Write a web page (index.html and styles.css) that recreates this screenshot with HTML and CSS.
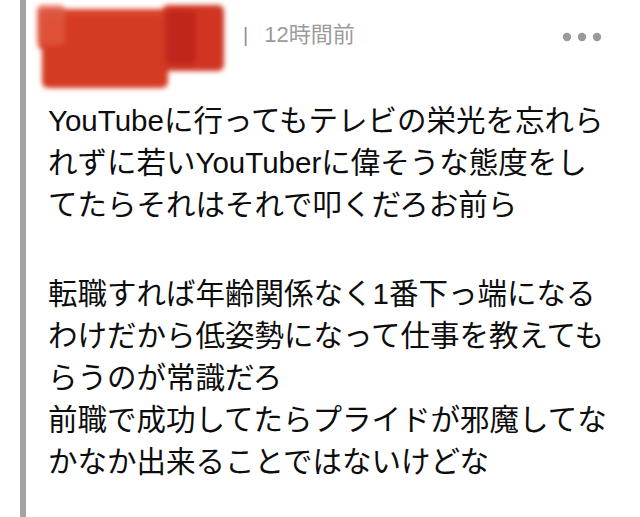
FILE: index.html
```html
<!DOCTYPE html>
<html lang="ja">
<head>
<meta charset="utf-8">
<link rel="stylesheet" href="styles.css">
</head>
<body>
<div class="post">
  <div class="head">
    <svg class="blob" width="204" height="95" viewBox="26 0 204 95" aria-hidden="true">
      <defs>
        <filter id="soft" x="-10%" y="-10%" width="120%" height="120%">
          <feGaussianBlur stdDeviation="2.4"/>
        </filter>
      </defs>
      <g filter="url(#soft)">
        <rect x="38" y="9" width="186" height="40" rx="4" fill="#d8432c"/>
        <rect x="42" y="18" width="126" height="70" rx="6" fill="#d53b23"/>
        <rect x="162" y="5" width="62" height="66" rx="6" fill="#d03624"/>
        <rect x="166" y="10" width="30" height="54" rx="6" fill="#c1271c"/>
        <rect x="37" y="5" width="28" height="40" rx="5" fill="#e05a42" opacity="0.75"/>
      </g>
    </svg>
    <div class="meta"><span class="sep">|</span><span class="time">12時間前</span></div>
    <svg class="more" width="40" height="10" viewBox="0 0 40 10" aria-label="more">
      <circle cx="5" cy="5" r="4.2" fill="#9a9a9a"/>
      <circle cx="20" cy="5" r="4.2" fill="#9a9a9a"/>
      <circle cx="35" cy="5" r="4.2" fill="#9a9a9a"/>
    </svg>
  </div>
  <p class="body">YouTubeに行ってもテレビの栄光を忘れら<br>れずに若いYouTuberに偉そうな態度をし<br>てたらそれはそれで叩くだろお前ら</p>
  <p class="body">転職すれば年齢関係なく1番下っ端になる<br>わけだから低姿勢になって仕事を教えても<br>らうのが常識だろ<br>前職で成功してたらプライドが邪魔してな<br>かなか出来ることではないけどな</p>
</div>
</body>
</html>
```

FILE: styles.css
```css
html, body {
  margin: 0;
  padding: 0;
  background: #ffffff;
}

.post {
  margin-left: 20px;
  border-left: 6px solid #a3a3a3;
  min-height: 517px;
  padding-left: 22px;
  box-sizing: border-box;
}

.head {
  display: flex;
  align-items: flex-start;
  margin-left: -22px;
  height: 100px;
}

.blob {
  display: block;
  flex: none;
}

.meta {
  display: flex;
  align-items: center;
  margin-top: 22px;
  margin-left: 13px;
  font-family: "Liberation Sans", "Noto Sans CJK JP", sans-serif;
  font-size: 22px;
  line-height: 26px;
  color: #9b9b9b;
}

.sep {
  font-size: 20px;
  margin-right: 16px;
  color: #8f8f8f;
}

.more {
  display: block;
  margin-left: auto;
  margin-right: 38px;
  margin-top: 32px;
}

.body {
  margin: 0;
  font-family: "Liberation Sans", "Noto Sans CJK JP", sans-serif;
  font-size: 29.5px;
  line-height: 42px;
  color: #0d0d0d;
  white-space: nowrap;
}

.body + .body {
  margin-top: 47px;
}
```
